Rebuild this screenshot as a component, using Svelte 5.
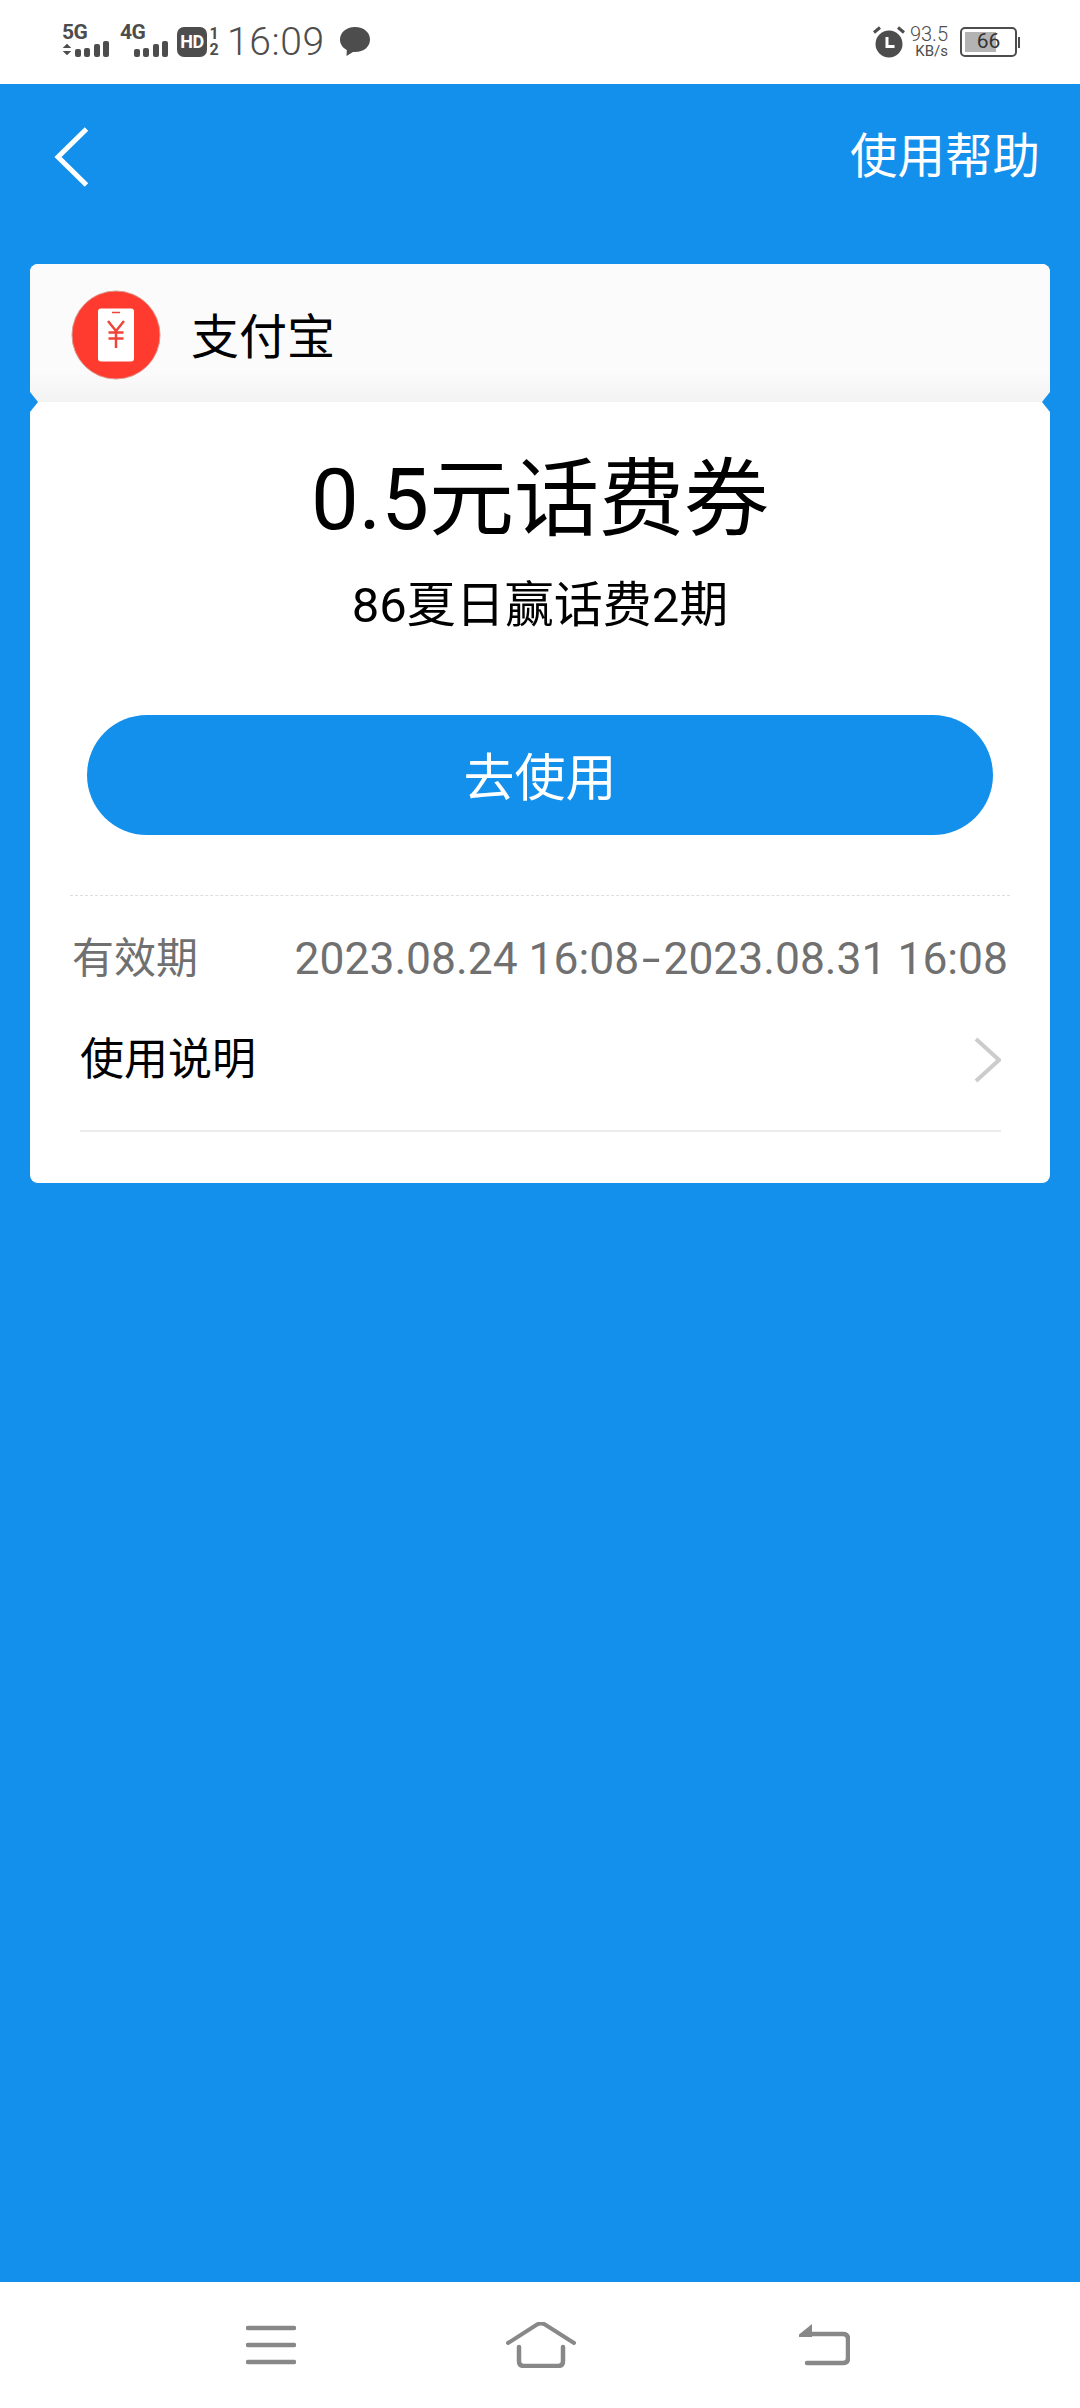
<script>
  const title = '0.5元话费券';
</script>

<div class="screen">
  <header class="status">
    <div class="status-left">
      <div class="sim">
        <span class="net">5G</span>
        <div class="bars-row">
          <svg class="arrows" width="14" height="16" viewBox="0 0 14 16"><path d="M7 0l6 6H1zM1 10h12l-6 6z" fill="#4d4d4d"/></svg>
          <div class="bars"><i class="b1"></i><i class="b2"></i><i class="b3"></i><i class="b4"></i></div>
        </div>
      </div>
      <div class="sim sim2">
        <span class="net">4G</span>
        <div class="bars"><i class="b1"></i><i class="b2"></i><i class="b3"></i><i class="b4"></i></div>
      </div>
      <span class="hd">HD</span>
      <div class="slots"><span>1</span><span>2</span></div>
      <span class="time">16:09</span>
      <svg class="msg" width="32" height="30" viewBox="0 0 32 30"><path d="M16 0C7 0 1 5.800 1 12.500c0 4.500 2.600 8.300 6.800 10.500L7.500 29l6.500-4c.7.100 1.300.100 2 .100 9 0 15-5.600 15-12.600S25 0 16 0z" fill="#4d4d4d"/></svg>
    </div>
    <div class="status-right">
      <svg class="alarm" width="32" height="32" viewBox="0 0 32 32">
        <circle cx="16" cy="18" r="13.500" fill="#4d4d4d"/>
        <path d="M14 11v9.500h7.500" fill="none" stroke="#fff" stroke-width="3"/>
        <path d="M1 6.500L7 1.500M31 6.500L25 1.500" stroke="#4d4d4d" stroke-width="3" fill="none"/>
      </svg>
      <div class="speed"><span class="sp1">93.5</span><span class="sp2">KB/s</span></div>
      <div class="battery">
        <div class="cell"><div class="fill"></div><span class="level">66</span></div>
        <div class="nub"></div>
      </div>
    </div>
  </header>

  <nav class="topbar">
    <svg class="back" width="40" height="62" viewBox="0 0 40 62"><path d="M34.500 3L6 31l28.500 28" fill="none" stroke="#fff" stroke-width="5"/></svg>
    <span class="help">使用帮助</span>
  </nav>

  <main class="content">
    <section class="card">
      <div class="card-head">
        <svg class="logo" width="90" height="90" viewBox="0 0 90 90">
          <circle cx="45" cy="45" r="44" fill="#ff3b2f" stroke="#d9998f" stroke-width="1"/>
          <rect x="27" y="18.500" width="36" height="53" rx="3" fill="#fff"/>
          <path d="M41 22.500h8" stroke="#f0443a" stroke-width="1.500"/>
          <path d="M37 31l8 10 8-10M45 41v17M37.500 42.500h15M37.500 48.500h15" fill="none" stroke="#f0443a" stroke-width="2.500"/>
        </svg>
        <span class="brand">支付宝</span>
      </div>
      <div class="notch left"></div>
      <div class="notch right"></div>
      <div class="card-body">
        <h1 class="title">{title}</h1>
        <p class="sub">86夏日赢话费2期</p>
        <button class="cta">去使用</button>
        <div class="dashed"></div>
        <div class="valid">
          <span class="valid-label">有效期</span>
          <span class="valid-date">2023.08.24 16:08<span class="hy">-</span>2023.08.31 16:08</span>
        </div>
        <div class="usage">
          <span>使用说明</span>
          <svg width="28" height="46" viewBox="0 0 28 46"><path d="M3 2l23 21L3 44" fill="none" stroke="#cccccc" stroke-width="4"/></svg>
        </div>
      </div>
    </section>
  </main>

  <footer class="sysnav">
    <svg class="ham" width="50" height="40" viewBox="0 0 50 40"><path d="M2 3h46M2 20h46M2 37h46" stroke="#888" stroke-width="4.500" stroke-linecap="round"/></svg>
    <svg class="home" width="70" height="46" viewBox="0 0 70 46"><path d="M2 21L31 2.500q4-2 8 0L68 21" fill="none" stroke="#888" stroke-width="4" stroke-linecap="round"/><path d="M13 25v14q0 5 5 5h34q5 0 5-5V25" fill="none" stroke="#888" stroke-width="4.500" stroke-linecap="round"/></svg>
    <svg class="ret" width="52" height="42" viewBox="0 0 52 42"><path d="M14 0v13H1v-2.500z" fill="#888"/><path d="M12 10h33q5 0 5 5v19q0 5-5 5H9" fill="none" stroke="#888" stroke-width="4.500" stroke-linecap="round"/></svg>
  </footer>
</div>

<style>
  :global(body) { margin: 0; background: #138fec; }
  .screen {
    width: 1080px; height: 2408px; display: flex; flex-direction: column;
    font-family: "Roboto", "Noto Sans CJK SC", sans-serif; background: #138fec; overflow: hidden;
  }
  .status {
    height: 84px; background: #fff; display: flex; justify-content: space-between; align-items: center;
    padding: 0 60px 0 62px; box-sizing: border-box; color: #4d4d4d; flex: none;
  }
  .status-left, .status-right { display: flex; align-items: center; }
  .sim { display: flex; flex-direction: column; align-items: flex-start; width: 48px; height: 32px; margin-top: -3px; position: relative; }
  .net { font: 700 21px/16px "Roboto", sans-serif; letter-spacing: -0.5px; margin-top: -1px; }
  .bars-row { display: flex; align-items: flex-end; gap: 3px; margin-top: 1px; }
  .arrows { display: block; width: 10px; height: 15px; flex: none; }
  .bars { display: flex; align-items: flex-end; gap: 3.400px; }
  .bars i { display: block; width: 6px; background: #4d4d4d; border-radius: 2px; }
  .b1 { height: 8px; } .b2 { height: 9px; } .b3 { height: 13px; } .b4 { height: 16px; }
  .sim2 { margin-left: 10px; width: 48px; }
  .sim2 .bars { align-self: flex-end; margin-top: 1px; }
  .hd {
    width: 30px; height: 30px; background: #4d4d4d; color: #fff; border-radius: 7px; margin-left: 9px;
    font: 700 18px/30px "Roboto", sans-serif; text-align: center; letter-spacing: -0.5px;
  }
  .slots { display: flex; flex-direction: column; font: 700 16px/16px "Roboto", sans-serif; margin-left: 2px; align-items: center; width: 10px; }
  .time { font: 300 39px/44px "Roboto", sans-serif; margin-left: 8px; letter-spacing: 0.6px; }
  .msg { margin-left: 14px; }
  .alarm { margin-right: 5px; }
  .speed { display: flex; flex-direction: column; align-items: flex-end; font-family: "Roboto", sans-serif; line-height: 1; margin-top: -1px; }
  .sp1 { font-size: 20px; font-weight: 300; }
  .sp2 { font-size: 15px; font-weight: 400; }
  .battery { display: flex; align-items: center; margin-left: 12px; }
  .cell {
    width: 57px; height: 30px; border: 2.500px solid #4d4d4d; border-radius: 5px; box-sizing: border-box;
    position: relative; padding: 3px; display: flex;
  }
  .fill { width: 66%; background: #b3b3b3; }
  .level { position: absolute; inset: 0; text-align: center; font: 400 21px/25px "Roboto", sans-serif; color: #333; }
  .nub { width: 2px; height: 11px; background: #4d4d4d; margin-left: 1px; }

  .topbar {
    height: 180px; flex: none; box-sizing: border-box; display: flex; justify-content: space-between; align-items: flex-start;
    padding: 41px 40px 0 52px;
  }
  .back { display: block; margin-top: 1px; }
  .help { font-size: 47.500px; line-height: 64px; color: #fff; }

  .content { flex: 1; padding: 0 30px; }
  .card { background: #fff; border-radius: 8px; position: relative; height: 919px; overflow: hidden; }
  .card-head {
    height: 138px; display: flex; align-items: center; box-sizing: border-box; padding: 0 0 0 41px;
    background: linear-gradient(#fbfbfb 0, #fbfbfb 78%, #f3f3f3 100%);
  }
  .logo { display: block; margin-right: 30px; margin-top: 3px; }
  .brand { font-size: 48px; line-height: 60px; color: #000; margin-top: 10px; }
  .notch { position: absolute; top: 128px; width: 16px; height: 20px; background: #138fec; }
  .notch.left { left: -8px; clip-path: polygon(50% 0, 100% 50%, 50% 100%, 0 100%, 0 0); }
  .notch.right { right: -8px; clip-path: polygon(50% 0, 100% 0, 100% 100%, 50% 100%, 0 50%); }
  .card-body { display: flex; flex-direction: column; align-items: stretch; }
  .title { margin: 48px 0 0; font-size: 85px; line-height: 100px; font-weight: 400; color: #000; text-align: center; }
  .sub { margin: 26px 0 0; font-size: 49px; line-height: 60px; color: #000; text-align: center; }
  .cta {
    margin: 79px 57px 0; height: 120px; border: 0; border-radius: 60px; background: #138fec; color: #fff;
    font-family: inherit; font-size: 51px; padding: 0 0 2px;
  }
  .dashed { margin: 60px 40px 0; border-top: 1px dashed #dedede; }
  .valid { margin: 33px 42px 0 42px; height: 60px; display: flex; justify-content: space-between; align-items: center; color: #707070; }
  .valid-label { font-size: 42px; line-height: 60px; }
  .valid-date { font-size: 44.400px; line-height: 60px; }
  .hy { display: inline-block; transform: scaleX(1.5); margin: 0 6px; }
  .usage {
    margin: 0 49px 0 50px; padding-bottom: 40px; padding-top: 41px; display: flex; justify-content: space-between; align-items: center;
    border-bottom: 2px solid #ececec; font-size: 44px; line-height: 60px; color: #000;
  }

  .sysnav {
    height: 126px; flex: none; background: #fff; display: flex; align-items: center;
    padding: 0 0 0 246px; box-sizing: border-box;
  }
  .home { margin-left: 210px; }
  .ret { margin-left: 222px; }
</style>
